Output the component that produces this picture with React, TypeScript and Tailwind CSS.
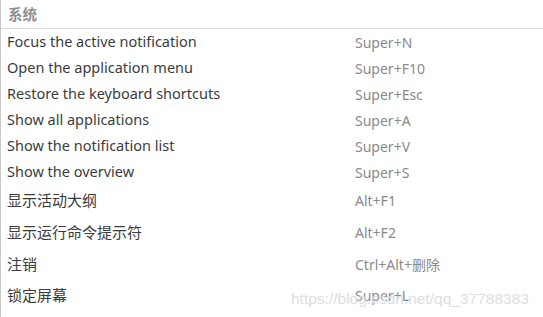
const rows: { name: string; keys: string; h: string; cjk?: boolean }[] = [
  { name: 'Focus the active notification', keys: 'Super+N', h: 'h-[26px]' },
  { name: 'Open the application menu', keys: 'Super+F10', h: 'h-[26px]' },
  { name: 'Restore the keyboard shortcuts', keys: 'Super+Esc', h: 'h-[26px]' },
  { name: 'Show all applications', keys: 'Super+A', h: 'h-[26px]' },
  { name: 'Show the notification list', keys: 'Super+V', h: 'h-[26px]' },
  { name: 'Show the overview', keys: 'Super+S', h: 'h-[26px]' },
  { name: '显示活动大纲', keys: 'Alt+F1', h: 'h-[31px]', cjk: true },
  { name: '显示运行命令提示符', keys: 'Alt+F2', h: 'h-[32px]', cjk: true },
  { name: '注销', keys: 'Ctrl+Alt+删除', h: 'h-[32px]', cjk: true },
  { name: '锁定屏幕', keys: 'Super+L', h: 'h-[31px]', cjk: true },
];

export default function App() {
  return (
    <div className="relative w-[543px] h-[317px] overflow-hidden bg-white border-l border-[#c9c9c9] font-['Noto_Sans','Noto_Sans_CJK_SC',sans-serif]">
      <div className="h-[29px] flex items-center pl-[7px] border-b border-[#dcdcdc]">
        <span className="text-[14.5px] font-bold text-[#8e8e8e] font-['Noto_Sans_CJK_SC',sans-serif]">系统</span>
      </div>

      {rows.map((r) => (
        <div key={r.name} className={`${r.h} flex items-center`}>
          <span
            className={
              r.cjk
                ? "w-[354px] shrink-0 pl-[6px] text-[15px] text-[#3c3c3c] font-['Noto_Sans_CJK_SC',sans-serif]"
                : "w-[354px] shrink-0 pl-[6px] text-[14.5px] text-[#3c3c3c] font-['Noto_Sans',sans-serif]"
            }
          >
            {r.name}
          </span>
          <span className="text-[14px] text-[#8a8a8a] font-['Noto_Sans','Noto_Sans_CJK_SC',sans-serif]">
            {r.keys}
          </span>
        </div>
      ))}

      <div className="pointer-events-none absolute left-[290px] top-[287px] text-[15.5px] text-[#dedede] font-['Liberation_Sans',sans-serif]">
        https://blog.csdn.net/qq_37788383
      </div>
    </div>
  );
}
